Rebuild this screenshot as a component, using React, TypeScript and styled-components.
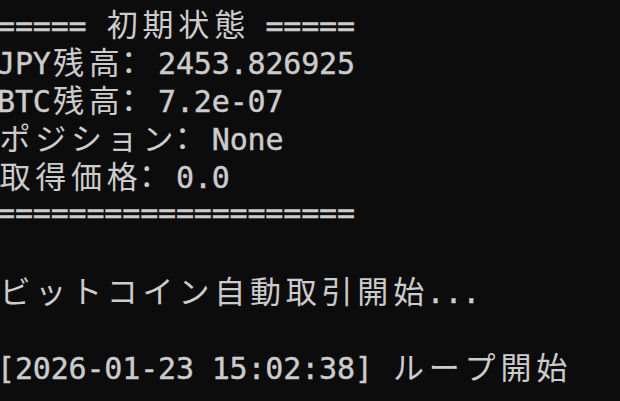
import React from "react";
import styled, { createGlobalStyle } from "styled-components";

const CW = 17.9;
const LH = 38.1;

const Global = createGlobalStyle`
  html, body { margin: 0; padding: 0; background: #0c0c0c; }
  body { width: 620px; height: 401px; overflow: hidden; }
`;

const Terminal = styled.div`
  width: 620px;
  height: 401px;
  box-sizing: border-box;
  padding-top: 4px;
  background: #0c0c0c;
  color: #cccccc;
  font-family: "DejaVu Sans Mono", "Noto Sans CJK JP", monospace;
  font-size: 30px;
  overflow: hidden;
`;

const Line = styled.div`
  height: ${LH}px;
  line-height: ${LH}px;
  white-space: pre;
  margin-left: -3px;
`;

const Cell = styled.span<{ $wide: boolean; $shift?: number }>`
  display: inline-block;
  width: ${(p) => (p.$wide ? CW * 2 : CW)}px;
  text-align: ${(p) => (p.$shift ? "left" : "center")};
  text-indent: ${(p) => p.$shift ?? 0}px;
  font-family: ${(p) =>
    p.$wide ? '"Noto Sans CJK JP", sans-serif' : '"DejaVu Sans Mono", monospace'};
  font-size: ${(p) => (p.$wide ? 31 : 30)}px;
  -webkit-text-stroke: ${(p) => (p.$wide ? "0" : "0.4px #cccccc")};
  vertical-align: baseline;
`;

const lines = [
  "===== 初期状態 =====",
  "JPY残高：2453.826925",
  "BTC残高：7.2e-07",
  "ポジション：None",
  "取得価格：0.0",
  "====================",
  "",
  "ビットコイン自動取引開始...",
  "",
  "[2026-01-23 15:02:38] ループ開始",
];

const isWide = (ch: string) => {
  const c = ch.codePointAt(0) || 0;
  return c >= 0x2e80;
};

export default function App() {
  return (
    <>
      <Global />
      <Terminal>
        {lines.map((l, i) => (
          <Line key={i}>
            {Array.from(l).map((ch, j) => (
              <Cell key={j} $wide={isWide(ch)} $shift={ch === "：" ? -9 : undefined}>
                {ch}
              </Cell>
            ))}
          </Line>
        ))}
      </Terminal>
    </>
  );
}
